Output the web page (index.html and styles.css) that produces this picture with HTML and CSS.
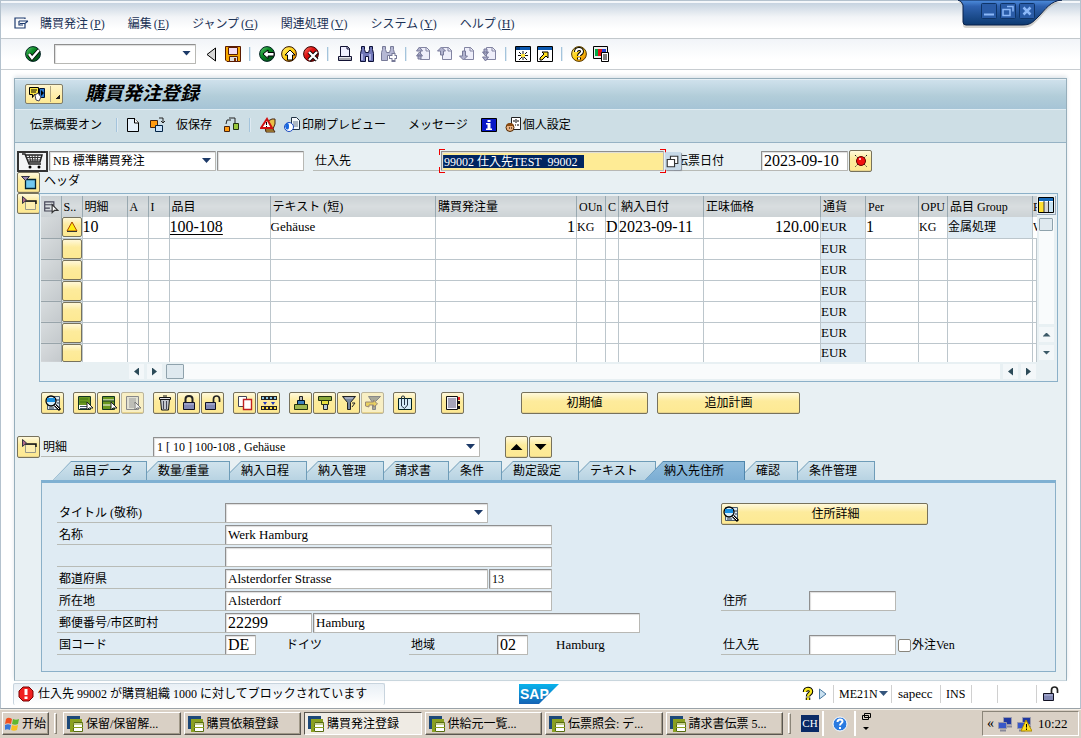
FILE: index.html
```html
<!DOCTYPE html>
<html lang="ja">
<head>
<meta charset="utf-8">
<title>購買発注登録</title>
<link rel="stylesheet" href="styles.css">
</head>
<body>
<svg class="defs" aria-hidden="true">
<defs>
<linearGradient id="gg" x1="0" y1="0" x2="1" y2="1"><stop offset="0" stop-color="#6fd07a"/><stop offset=".4" stop-color="#0a8a25"/><stop offset="1" stop-color="#033f10"/></linearGradient>
<linearGradient id="gy" x1="0" y1="0" x2="1" y2="1"><stop offset="0" stop-color="#fff27a"/><stop offset=".5" stop-color="#ffcf10"/><stop offset="1" stop-color="#e87a00"/></linearGradient>
<linearGradient id="gr" x1="0" y1="0" x2="1" y2="1"><stop offset="0" stop-color="#ff8a7a"/><stop offset=".4" stop-color="#e01010"/><stop offset="1" stop-color="#7a0505"/></linearGradient>
<linearGradient id="gsap" x1="0" y1="0" x2="0" y2="1"><stop offset="0" stop-color="#08b3ec"/><stop offset="1" stop-color="#1462b4"/></linearGradient>
<linearGradient id="gwin" x1="0" y1="0" x2="0" y2="1"><stop offset="0" stop-color="#4f8fe0"/><stop offset=".25" stop-color="#2f62b0"/><stop offset="1" stop-color="#0d3a70"/></linearGradient>
</defs>
<symbol id="exit" viewBox="0 0 16 16"><path d="M11 9v4H1V3h10v1M5 6h9M5 6v4h4M14 6l-3 2.5H6" fill="none" stroke="#1d3a6e" stroke-width="1.2"/></symbol>
<symbol id="ok" viewBox="0 0 16 16"><circle cx="8" cy="8" r="7.400" fill="url(#gg)" stroke="#022" /><path d="M4 8l3 4 7-8" fill="none" stroke="#000" stroke-width="4"/><path d="M4 8l3 4 7-8" fill="none" stroke="#fff" stroke-width="2.4"/></symbol>
<symbol id="prev" viewBox="0 0 16 16"><path d="M12.500 2v13L4 8.500z" fill="#d8d8d8" stroke="#000"/></symbol>
<symbol id="save" viewBox="0 0 16 16"><path d="M.500.500h15v15H2l-1.500-1.500z" fill="#f5a800" stroke="#5a1a00"/><path d="M3.500 1.500h9v7h-9z" fill="#f2dcf2" stroke="#5a1a00"/><path d="M4.500 10.500h8v5h-8z" fill="#ddd" stroke="#5a1a00"/><path d="M9 12h2v3H9z" fill="#7a2a00"/></symbol>
<symbol id="back" viewBox="0 0 16 16"><circle cx="8" cy="8" r="7.400" fill="url(#gg)" stroke="#022"/><path d="M4 8l5-4v2.500h6v3.500H9v2.500z" fill="#fff" stroke="#000"/></symbol>
<symbol id="upy" viewBox="0 0 16 16"><circle cx="8" cy="8" r="7.400" fill="url(#gy)" stroke="#310"/><path d="M9 4l5 5h-2.500v5h-5V9H4z" fill="#fff" stroke="#000"/></symbol>
<symbol id="cancel" viewBox="0 0 16 16"><circle cx="8" cy="8" r="7.400" fill="url(#gr)" stroke="#300"/><path d="M6 6l8 8M14 6l-8 8" stroke="#000" stroke-width="4"/><path d="M6 6l8 8M14 6l-8 8" stroke="#fff" stroke-width="2.400"/></symbol>
<symbol id="print" viewBox="0 0 16 16"><path d="M3.500.500h7l2 2v8h-9z" fill="#eef" stroke="#113"/><path d="M10 0v3h3" fill="none" stroke="#113"/><path d="M1.500 10.500h13v4h-13z" fill="#e4e4ec" stroke="#113"/><path d="M2 13h12" stroke="#667"/></symbol>
<symbol id="find" viewBox="0 0 16 16"><path d="M2.500 3.500v-3h3v3l1 3h3l1-3v-3h3v3l1 4v8h-5v-5h-3v5h-5v-8z" fill="#7077b8" stroke="#0c1038"/><path d="M3 8v6M11 8v6" stroke="#c4c8f0" stroke-width="1.500"/></symbol>
<symbol id="findn" viewBox="0 0 16 16"><path d="M1.500 3.500v-3h3v3l1 3h3l1-3v-3h3v3l1 4v5h-4v-3h-3v5h-6v-8z" fill="#b5b8d4" stroke="#777a98"/><path d="M8 11h8M12.500 7v9" stroke="#777a98" stroke-width="4"/><path d="M9 11h6M12.500 8v6" stroke="#fff" stroke-width="2"/></symbol>
<symbol id="sheet" viewBox="0 0 16 16"><path d="M5.500 1.500h6l3 3v9h-9z" fill="#eeeefa" stroke="#8284a2"/><path d="M11 1v4h4" fill="none" stroke="#8284a2"/></symbol>
<symbol id="pgf" viewBox="0 0 16 16"><use href="#sheet"/><path d="M4.500 1l3 4h-6zM4.500 6l3 4h-6zM3 9h3v4H3z" fill="#b0b2ce" stroke="#77799a"/></symbol>
<symbol id="pgu" viewBox="0 0 16 16"><use href="#sheet"/><path d="M4.500 1l4 4h-2v4h-3V5h-3z" fill="#b0b2ce" stroke="#77799a"/></symbol>
<symbol id="pgd" viewBox="0 0 16 16"><use href="#sheet"/><path d="M4.500 14l4-4h-2V5h-3v5h-3z" fill="#b0b2ce" stroke="#77799a"/></symbol>
<symbol id="pgl" viewBox="0 0 16 16"><use href="#sheet"/><path d="M4.500 15l3-4h-6zM4.500 10l3-4h-6zM3 3h3v4H3z" fill="#b0b2ce" stroke="#77799a"/></symbol>
<symbol id="sess" viewBox="0 0 16 16"><path d="M.5.5h15v15H.5z" fill="#fff" stroke="#000"/><path d="M1 1h14v3H1z" fill="#0a58b0"/><path d="M1 1h4v3H1z" fill="#003a80"/><path d="M8 5v9M3 9.500h10M4 6l8 8M12 6l-8 8" stroke="#111"/><path d="M6 8h4v3H6z" fill="#ffe640"/></symbol>
<symbol id="short" viewBox="0 0 16 16"><path d="M.5.5h15v15H.5z" fill="#fff" stroke="#000"/><path d="M1 1h14v3H1z" fill="#0a58b0"/><path d="M3 14v-2l4-4-2-2h6v6l-2-2-4 4z" fill="#ffe020" stroke="#000"/></symbol>
<symbol id="helpy" viewBox="0 0 16 16"><circle cx="8" cy="8" r="7.400" fill="url(#gy)" stroke="#543800"/><path d="M5 6c0-4 6-4 6-.5 0 2.500-3 2-3 4.500M8 11.500v2" fill="none" stroke="#000" stroke-width="4"/><path d="M5 6c0-4 6-4 6-.5 0 2.500-3 2-3 4.500M8 11.500v2" fill="none" stroke="#fff" stroke-width="2"/></symbol>
<symbol id="lay" viewBox="0 0 16 16"><path d="M.5.500h14v12H.5z" fill="#eee" stroke="#000"/><path d="M2 3h3v7H2z" fill="#0a4"/><path d="M5 3h4v7H5z" fill="#e01010"/><path d="M9 3h4v7H9z" fill="#2040d0"/><path d="M8.500 6.500h7v9h-7z" fill="#fff" stroke="#000"/><path d="M10 9h4M10 11h4M10 13h4" stroke="#000"/></symbol>
<symbol id="svc" viewBox="0 0 16 16"><path d="M.5 1.500h9v7h-4l-2 3v-3h-3z" fill="#ffe840" stroke="#000"/><path d="M2 4h6M2 6h5" stroke="#000"/><path d="M10.500 2.500h5v9h-5z" fill="#2a78d0" stroke="#013"/><path d="M12 4l3 3-3 3z" fill="#000"/><path d="M6 9l3-2 3 4-2 4-3-1z" fill="#fff" stroke="#445"/></symbol>
<symbol id="page" viewBox="0 0 16 16"><path d="M2.500 1.500h7l4 4v9h-11z" fill="#e4f0fa" stroke="#000"/><path d="M9.500 1v5h4" fill="#fff" stroke="#000"/></symbol>
<symbol id="other" viewBox="0 0 16 16"><path d="M1.500 3.500h7v7h-7z" fill="#ff9a10" stroke="#421"/><path d="M6.500 8.500h7v6h-7z" fill="#c8e0f8" stroke="#024"/><path d="M10 1h4v5M12 4l2 2 2-2" fill="none" stroke="#222"/></symbol>
<symbol id="hold" viewBox="0 0 16 16"><path d="M1.500 9.500h5v5h-5z" fill="#ff9a10" stroke="#421"/><path d="M10.500 6.500h5v6h-5z" fill="#9ac83c" stroke="#231"/><path d="M3 7l1-4h4M6 1h6v5" fill="none" stroke="#222"/></symbol>
<symbol id="chk" viewBox="0 0 16 16"><path d="M4 6l8-4h3v5l-2 5 2 3H6z" fill="#e8c048" stroke="#421"/><path d="M7 2l5 9H1z" fill="#fff" stroke="#d01010" stroke-width="2"/><path d="M6.500 5v3M6.500 9v1" stroke="#000"/><path d="M5 13h9" stroke="#421"/></symbol>
<symbol id="prv" viewBox="0 0 16 16"><path d="M7.500.500h5l3 3v9h-8z" fill="#f4f8fc" stroke="#234"/><path d="M9 5h5M9 7h5M9 9h5" stroke="#678"/><circle cx="5" cy="10" r="4.500" fill="#fff" stroke="#1848c0"/><path d="M1 9c1-4 4-4 4 0s-1 4-3 3z" fill="#1868e0"/></symbol>
<symbol id="info" viewBox="0 0 16 16"><path d="M.5 1.500h15v13H.5z" fill="#0818c8" stroke="#000"/><path d="M6.500 3h3v2h-3zM5 6h4.500v5.500H11V13H5v-1.500h1.500V7.500H5z" fill="#fff"/></symbol>
<symbol id="pers" viewBox="0 0 16 16"><path d="M6.500.500h9v12h-9z" fill="#fff" stroke="#222"/><path d="M8 4h2M12 4h2M10 8h1M12 8h2M11 2v4" stroke="#000"/><circle cx="5" cy="10.500" r="4" fill="#e8b080" stroke="#502800"/><path d="M1 9c1-4 7-4 8 0z" fill="#8a4a10"/><path d="M4 11h1M6 11h1" stroke="#000"/></symbol>
<symbol id="cart" viewBox="0 0 24 16"><path d="M1 1h3l4 10h12M5 2h16l-2 7H8" fill="none" stroke="#222" stroke-width="1.500"/><path d="M8 2l2 7M11 2l1 7M14 2v7M17 2l-1 7M6 4.500h14M7 7h12" stroke="#333"/><circle cx="9" cy="14" r="1.500"/><circle cx="18" cy="14" r="1.500"/></symbol>
<symbol id="opn" viewBox="0 0 16 16"><path d="M4.500 4.500h10v9h-10z" fill="#70c8f0" stroke="#023" stroke-width="1.300"/><path d="M.5 1.500h8l-4 4z" fill="#9a88b0" stroke="#334"/></symbol>
<symbol id="cls" viewBox="0 0 16 16"><path d="M4.500 5.500h10v8h-10z" fill="#fdeeb0" stroke="#998"/><path d="M4 5h11v3" fill="none" stroke="#111" stroke-width="1.500"/><path d="M1.500.500v7l4-3.500z" fill="#b06888" stroke="#334"/></symbol>
<symbol id="sel" viewBox="0 0 14 14"><path d="M1.500 2.500h8v8h-8zM1 5h8M1 8h5" fill="none" stroke="#445"/><path d="M8 5v7l2-2h3z" fill="#fff" stroke="#333"/></symbol>
<symbol id="warn" viewBox="0 0 14 14"><path d="M7 2l5 9H2z" fill="#ffee10" stroke="#a40" /><path d="M2 11.500h10" stroke="#333"/></symbol>
<symbol id="match" viewBox="0 0 16 16"><path d="M5.500 1.500h9v9h-9z" fill="#fff" stroke="#333" stroke-width="1.400"/><path d="M1.500 5.500h9v9h-9z" fill="#fff" stroke="#333" stroke-width="1.400"/></symbol>
<symbol id="red" viewBox="0 0 16 16"><path d="M2 2l12 12M14 2L2 14" stroke="#222" stroke-dasharray="1.500 1"/><circle cx="8" cy="8" r="4.500" fill="#f01010" stroke="#600"/><path d="M6 6h2" stroke="#fbb" stroke-width="2"/></symbol>
<symbol id="cfg" viewBox="0 0 16 16"><path d="M.5.5h15v15H.5z" fill="#fff" stroke="#000"/><path d="M1 1h14v3H1z" fill="#1468b8"/><path d="M1 5h5v10H1z" fill="#ffe030"/><path d="M6 5h4v10H6z" fill="#d8d8d8"/><path d="M11 5h4v10h-4z" fill="#c8e4f4"/><path d="M6 4v11M10.500 4v11" stroke="#333"/></symbol>
<symbol id="mag" viewBox="0 0 18 18"><path d="M3.500 2.500h12v13h-12z" fill="#dce8f2" stroke="#4a5a68"/><path d="M12 6h3M13 9h2M5 14h5" stroke="#234"/><circle cx="7" cy="7" r="5" fill="#d4ecfa" stroke="#000" stroke-width="1.300"/><path d="M3 4h8v4H3z" fill="#1890e0"/><path d="M11 11l5 5" stroke="#000" stroke-width="3"/><path d="M11 11l4 4" stroke="#fff"/></symbol>
<symbol id="sall" viewBox="0 0 18 18"><path d="M2.500 2.500h12v13h-12z" fill="#fff" stroke="#132"/><path d="M3 3h11v8H3z" fill="#6a9820"/><path d="M4 12.500h7M4 14.500h7" stroke="#456"/><path d="M4 5h8M4 8h7" stroke="#3c7010"/><path d="M11 8v8l2-2h4z" fill="#fff" stroke="#222"/></symbol>
<symbol id="sblk" viewBox="0 0 18 18"><path d="M2.500 2.500h12v13h-12z" fill="#6a9820" stroke="#132"/><path d="M3 6h11M3 11h8" stroke="#fff"/><path d="M3 7h11" stroke="#132"/><path d="M11 8v8l2-2h4z" fill="#fff" stroke="#222"/></symbol>
<symbol id="dsel" viewBox="0 0 18 18"><path d="M2.500 2.500h12v13h-12z" fill="#e2e2d4" stroke="#888"/><path d="M5 5h7M5 7h7M5 9h6M5 11h5M5 13h5" stroke="#999"/><path d="M11 8v8l2-2h4z" fill="#eee" stroke="#777"/></symbol>
<symbol id="trash" viewBox="0 0 18 18"><path d="M4.500 5h9l-1 11h-7z" fill="#c4c8d0" stroke="#111"/><path d="M3.500 3.500h11v2h-11zM7 2h4" fill="#e4e4ea" stroke="#111"/><path d="M7.500 7v8M10.500 7v8" stroke="#445"/></symbol>
<symbol id="lock" viewBox="0 0 18 18"><path d="M5.500 9V5c0-4 7-4 7 0v4" fill="none" stroke="#222" stroke-width="2"/><path d="M3.500 8.500h11v7h-11z" fill="#8288b4" stroke="#112"/><path d="M4 10h10" stroke="#b4b8dc"/></symbol>
<symbol id="unlock" viewBox="0 0 18 18"><path d="M9.500 9V5c0-4 6-4 6 0v3" fill="none" stroke="#222" stroke-width="1.700"/><path d="M1.500 8.500h10v7h-10z" fill="#8288b4" stroke="#112"/><path d="M2 10h9" stroke="#b4b8dc"/></symbol>
<symbol id="copy" viewBox="0 0 18 18"><path d="M2.500 2.500h8v10h-8z" fill="#fff" stroke="#445"/><path d="M7.500 5.500h8v10h-8z" fill="#fff" stroke="#c02020" stroke-width="1.400"/></symbol>
<symbol id="dflt" viewBox="0 0 18 18"><path d="M1 2h16v4H1zM1 12h16v4H1z" fill="#222"/><path d="M2 4h2M6 4h2M10 4h2M14 4h2" stroke="#8cc8e8" stroke-width="2"/><path d="M2 14h2M6 14h2M10 14h2M14 14h2" stroke="#ffe040" stroke-width="2"/><path d="M3 8h4l-2 3zM11 8h4l-2 3z" fill="#2038c0"/></symbol>
<symbol id="sasc" viewBox="0 0 18 18"><path d="M7.500 2.500h3v4h-3z" fill="#bbb" stroke="#222"/><path d="M5.500 6.500h7v4h-7z" fill="#3c80c0" stroke="#012"/><path d="M2.500 10.500h13v5h-13z" fill="#a0b850" stroke="#231"/></symbol>
<symbol id="sdes" viewBox="0 0 18 18"><path d="M2.500 2.500h13v4h-13z" fill="#8aa838" stroke="#231"/><path d="M5.500 6.500h7v4h-7z" fill="#e8e040" stroke="#231"/><path d="M7.500 10.500h4v5h-4z" fill="#b8ccd8" stroke="#222"/></symbol>
<symbol id="filt" viewBox="0 0 18 18"><path d="M2.500 2.500h13l-5 6v7h-3v-7z" fill="#7888a0" stroke="#222"/><path d="M5 4h8" stroke="#ccd"/><path d="M12 9h3l-3 4" fill="none" stroke="#222"/></symbol>
<symbol id="fdel" viewBox="0 0 18 18"><path d="M4.500 2.500h12l-5 5v8h-3v-7z" fill="#a8a898" stroke="#888"/><path d="M1.500 12V8h8V6l4 4-4 3v-2H5v2z" fill="#e8d060" stroke="#987"/></symbol>
<symbol id="att" viewBox="0 0 18 18"><path d="M2.500 4.500h13v11h-13z" fill="#d4ecf8" stroke="#022"/><path d="M5.500 3v9l3 2.500 3-3.500V4M5.500 3q0-1 1.500-1t1.500 1v8" fill="none" stroke="#234"/></symbol>
<symbol id="note" viewBox="0 0 18 18"><path d="M2.500 2.500h11v13h-11z" fill="#f4f4fa" stroke="#111"/><path d="M4 5h8M4 7h8M4 9h8M4 11h8M4 13h8" stroke="#557"/><path d="M14 3h2v3h-2z" fill="#e02020"/><path d="M14 7h2v3h-2zM14 12h2v3h-2z" fill="#111"/></symbol>
<symbol id="err" viewBox="0 0 16 16"><path d="M5 1h6l4 4v6l-4 4H5l-4-4V5z" fill="#f02020" stroke="#700"/><path d="M6.500 3h3v6h-3zM6.500 10.500h3v2.500h-3z" fill="#fff"/></symbol>
<symbol id="q" viewBox="0 0 14 16"><path d="M4 6c0-4 6-4 6-.5 0 2.500-3 2-3 5M7 11.500v2.500" fill="none" stroke="#000" stroke-width="4.500"/><path d="M4 6c0-4 6-4 6-.5 0 2.500-3 2-3 5M7 11.500v2.500" fill="none" stroke="#f8e820" stroke-width="2.400"/></symbol>
<symbol id="play" viewBox="0 0 10 16"><path d="M1.500 3v10L8 8z" fill="#c8e0f0" stroke="#4878a0"/></symbol>
<symbol id="flag" viewBox="0 0 16 16"><path d="M2 3c2-2 4-1 6 0l-1 5c-2-1-4-1-6 0z" fill="#f05020"/><path d="M9 3c2 1 4 1 6 0l-1 5c-2 1-4 1-6 0z" fill="#60b830"/><path d="M1 9c2-1 4-1 6 0l-1 5c-2-1-4-1-5 0z" fill="#3878d8"/><path d="M8 9c2 1 4 1 6 0l-1 5c-2 1-4 1-6 0z" fill="#f8c020"/></symbol>
<symbol id="win" viewBox="0 0 18 18"><path d="M1 1h13v3H4v10H1z" fill="#1c4878"/><path d="M4 4h12v3H7v10H4z" fill="#8aa020"/><path d="M7.500 7.500h9v9h-9z" fill="#fff" stroke="#566b10"/><path d="M7 9h10M7 12.500h10" stroke="#8aa020"/></symbol>
<symbol id="helpb" viewBox="0 0 16 16"><circle cx="8" cy="8" r="7" fill="#2a7ae0" stroke="#fff"/><path d="M5.500 6c0-3.500 5-3 5-.5 0 2-2.500 1.500-2.500 4M8 11v2" fill="none" stroke="#fff" stroke-width="2"/></symbol>
<symbol id="rest" viewBox="0 0 10 10"><path d="M3.500 1.500h6v4h-6zM1.500 3.500h6v4h-6z" fill="#d8d0c4" stroke="#000"/></symbol>
<symbol id="net" viewBox="0 0 16 16"><path d="M6.500 1.500h8v7h-8z" fill="#2038a0" stroke="#99a"/><path d="M1.500 6.500h8v6h-8z" fill="#3858c8" stroke="#99a"/><path d="M3 14.500h6M10 10.500h5" stroke="#889" stroke-width="2"/></symbol>
</svg>

<div class="app">
  <header class="menubar">
    <svg class="ic"><use href="#exit"/></svg>
    <nav class="menu">
      <button type="button">購買発注<span>(<u>P</u>)</span></button><button type="button">編集<span>(<u>E</u>)</span></button><button type="button">ジャンプ<span>(<u>G</u>)</span></button><button type="button">関連処理<span>(<u>V</u>)</span></button><button type="button">システム<span>(<u>Y</u>)</span></button><button type="button">ヘルプ<span>(<u>H</u>)</span></button>
    </nav>
    <svg class="winctl" viewBox="0 0 104 32" role="img" aria-label="ウィンドウ操作">
      <path d="M0 0h104c-12 2-16 10-24 18-6 6-8 8-16 8H8q-3 0-3-3V5Q4 1 0 0z" fill="#b8b4ac" opacity=".6" transform="translate(0 2)"/>
      <path d="M0 0h104c-12 1-16 9-24 17-6 6-8 8-16 8H8q-3 0-3-3V5Q4 1 0 0z" fill="url(#gwin)" stroke="#08204a"/>
      <g fill="#2a5ca8" stroke="#0e3468"><rect x="23.500" y="3.500" width="15" height="15" rx="1"/><rect x="42.500" y="3.500" width="15" height="15" rx="1"/><rect x="61.500" y="3.500" width="15" height="15" rx="1"/></g>
      <path d="M26 14.500h10" stroke="#8cb8f8" stroke-width="2"/><path d="M49 6.500h6v5M45 9.500h7v6h-7z" fill="none" stroke="#8cb8f8" stroke-width="1.500"/><path d="M65.500 7.500l7 7M72.500 7.500l-7 7" stroke="#8cb8f8" stroke-width="2.500"/>
    </svg>
  </header>

  <div class="stdbar">
    <button class="tb" aria-label="Enter"><svg class="ic"><use href="#ok"/></svg></button>
    <span class="combo cmd"><select aria-label="コマンド"><option></option></select></span>
    <div class="tools">
      <button class="tb" aria-label="閉じる"><svg class="ic"><use href="#prev"/></svg></button>
      <button class="tb" aria-label="保存"><svg class="ic"><use href="#save"/></svg></button><i class="sep"></i>
      <button class="tb" aria-label="戻る"><svg class="ic"><use href="#back"/></svg></button>
      <button class="tb" aria-label="終了"><svg class="ic"><use href="#upy"/></svg></button>
      <button class="tb" aria-label="取消"><svg class="ic"><use href="#cancel"/></svg></button><i class="sep"></i>
      <button class="tb" aria-label="印刷"><svg class="ic"><use href="#print"/></svg></button>
      <button class="tb" aria-label="検索"><svg class="ic"><use href="#find"/></svg></button>
      <button class="tb" aria-label="次を検索"><svg class="ic"><use href="#findn"/></svg></button><i class="sep"></i>
      <button class="tb" aria-label="先頭ページ"><svg class="ic"><use href="#pgf"/></svg></button>
      <button class="tb" aria-label="前ページ"><svg class="ic"><use href="#pgu"/></svg></button>
      <button class="tb" aria-label="次ページ"><svg class="ic"><use href="#pgd"/></svg></button>
      <button class="tb" aria-label="最終ページ"><svg class="ic"><use href="#pgl"/></svg></button><i class="sep"></i>
      <button class="tb" aria-label="新規セッション"><svg class="ic"><use href="#sess"/></svg></button>
      <button class="tb" aria-label="ショートカット"><svg class="ic"><use href="#short"/></svg></button><i class="sep"></i>
      <button class="tb" aria-label="ヘルプ"><svg class="ic"><use href="#helpy"/></svg></button>
      <button class="tb" aria-label="レイアウト"><svg class="ic"><use href="#lay"/></svg></button>
    </div>
  </div>

  <main class="screen">
    <div class="titlebar">
      <button class="svcbtn" aria-label="サービス"><svg class="ic"><use href="#svc"/></svg><i></i></button>
      <h1>購買発注登録</h1>
    </div>
    <div class="appbar">
      <button class="tb">伝票概要オン</button><i class="sep s1"></i>
      <button class="tb" aria-label="新規"><svg class="ic"><use href="#page"/></svg></button>
      <button class="tb" aria-label="他の購買発注"><svg class="ic"><use href="#other"/></svg></button>
      <button class="tb park">仮保存</button>
      <button class="tb" aria-label="階層"><svg class="ic"><use href="#hold"/></svg></button><i class="sep s2"></i>
      <button class="tb" aria-label="チェック"><svg class="ic"><use href="#chk"/></svg></button>
      <button class="tb"><svg class="ic"><use href="#prv"/></svg>印刷プレビュー</button>
      <button class="tb msg">メッセージ</button>
      <button class="tb" aria-label="情報"><svg class="ic"><use href="#info"/></svg></button>
      <button class="tb"><svg class="ic"><use href="#pers"/></svg>個人設定</button>
    </div>

    <div class="content">
      <div class="dochead">
        <button class="cart" aria-label="カート"><svg><use href="#cart"/></svg></button>
        <span class="combo doctype"><select aria-label="伝票タイプ"><option>NB 標準購買発注</option></select></span>
        <input class="fld docno" aria-label="伝票番号">
        <label class="lb vend" for="vendor">仕入先</label>
        <span class="focus"><input class="fld" id="vendor" value="99002 仕入先TEST  99002"><i class="mk tl"></i><i class="mk tr"></i><i class="mk bl"></i><i class="mk br"></i></span>
        <button class="match" aria-label="検索ヘルプ"><svg><use href="#match"/></svg></button>
        <label class="lb date" for="docdate">伝票日付</label>
        <input class="fld big dd" id="docdate" value="2023-09-10">
        <button class="yb" aria-label="日付状況"><svg><use href="#red"/></svg></button>
      </div>

      <div class="overview">
        <div class="side">
          <button class="yb" aria-label="ヘッダを開く"><svg><use href="#opn"/></svg></button>
          <button class="yb" aria-label="明細一覧を閉じる"><svg><use href="#cls"/></svg></button>
        </div>
        <div class="ovmain">
          <div class="hdrlabel">ヘッダ</div>
          <div class="gridbox">
            <div class="gridrow">
              <table class="grid">
                <colgroup><col class="w20"><col class="w21"><col class="w45"><col class="w21"><col class="w21"><col class="w101"><col><col class="w141"><col class="w29"><col class="w13"><col class="w85"><col class="w117"><col class="w45"><col class="w53"><col class="w29"><col class="w85"><col class="w4"></colgroup>
                <thead><tr><th><svg class="ic"><use href="#sel"/></svg></th><th>S..</th><th>明細</th><th>A</th><th>I</th><th>品目</th><th>テキスト (短)</th><th>購買発注量</th><th>OUn</th><th>C</th><th>納入日付</th><th>正味価格</th><th>通貨</th><th>Per</th><th>OPU</th><th>品目 Group</th><th class="cut">P</th></tr></thead>
                <tbody>
                <tr><td class="rs"></td><td class="st"><button aria-label="警告"><svg><use href="#warn"/></svg></button></td><td class="big">10</td><td></td><td></td><td class="big"><a href="#item">100-108</a></td><td class="lat">Gehäuse</td><td class="big num">1</td><td>KG</td><td class="big">D</td><td class="big">2023-09-11</td><td class="big num">120.00</td><td class="ro eur">EUR</td><td class="big">1</td><td>KG</td><td class="ro">金属処理</td><td class="cut">W</td></tr>
                <tr><td class="rs"></td><td class="st"><button aria-label="状況"></button></td><td></td><td></td><td></td><td></td><td></td><td></td><td></td><td></td><td></td><td></td><td class="ro eur">EUR</td><td></td><td></td><td></td><td></td></tr>
                <tr><td class="rs"></td><td class="st"><button aria-label="状況"></button></td><td></td><td></td><td></td><td></td><td></td><td></td><td></td><td></td><td></td><td></td><td class="ro eur">EUR</td><td></td><td></td><td></td><td></td></tr>
                <tr><td class="rs"></td><td class="st"><button aria-label="状況"></button></td><td></td><td></td><td></td><td></td><td></td><td></td><td></td><td></td><td></td><td></td><td class="ro eur">EUR</td><td></td><td></td><td></td><td></td></tr>
                <tr><td class="rs"></td><td class="st"><button aria-label="状況"></button></td><td></td><td></td><td></td><td></td><td></td><td></td><td></td><td></td><td></td><td></td><td class="ro eur">EUR</td><td></td><td></td><td></td><td></td></tr>
                <tr><td class="rs"></td><td class="st"><button aria-label="状況"></button></td><td></td><td></td><td></td><td></td><td></td><td></td><td></td><td></td><td></td><td></td><td class="ro eur">EUR</td><td></td><td></td><td></td><td></td></tr>
                <tr class="last"><td class="rs"></td><td class="st"><button aria-label="状況"></button></td><td></td><td></td><td></td><td></td><td></td><td></td><td></td><td></td><td></td><td></td><td class="ro eur">EUR</td><td></td><td></td><td></td><td></td></tr>
                </tbody>
              </table>
              <div class="vscroll">
                <button class="cfg" aria-label="テーブル設定"><svg class="ic"><use href="#cfg"/></svg></button>
                <div class="vtrack"><i class="thumb"></i></div>
                <button class="arr" aria-label="上へ"><i class="a-up"></i></button>
                <button class="arr" aria-label="下へ"><i class="a-dn"></i></button>
              </div>
            </div>
            <div class="hscroll">
              <button class="arr" aria-label="左へ"><i class="a-lt"></i></button><button class="arr" aria-label="右へ"><i class="a-rt"></i></button>
              <div class="htrack"><i class="thumb"></i></div>
              <button class="arr" aria-label="左へ"><i class="a-lt"></i></button><button class="arr" aria-label="右へ"><i class="a-rt"></i></button>
            </div>
          </div>
        </div>
      </div>

      <div class="itembar">
        <div class="grp"><button class="yb" aria-label="明細照会"><svg><use href="#mag"/></svg></button></div>
        <div class="grp"><button class="yb" aria-label="全選択"><svg><use href="#sall"/></svg></button><button class="yb" aria-label="ブロック選択"><svg><use href="#sblk"/></svg></button><button class="yb dis" aria-label="選択解除"><svg><use href="#dsel"/></svg></button></div>
        <div class="grp"><button class="yb" aria-label="削除"><svg><use href="#trash"/></svg></button><button class="yb" aria-label="ロック"><svg><use href="#lock"/></svg></button><button class="yb" aria-label="ロック解除"><svg><use href="#unlock"/></svg></button></div>
        <div class="grp"><button class="yb" aria-label="コピー"><svg><use href="#copy"/></svg></button><button class="yb" aria-label="項目一括"><svg><use href="#dflt"/></svg></button></div>
        <div class="grp"><button class="yb" aria-label="昇順"><svg><use href="#sasc"/></svg></button><button class="yb" aria-label="降順"><svg><use href="#sdes"/></svg></button><button class="yb" aria-label="フィルタ"><svg><use href="#filt"/></svg></button><button class="yb dis" aria-label="フィルタ解除"><svg><use href="#fdel"/></svg></button></div>
        <div class="grp"><button class="yb" aria-label="添付"><svg><use href="#att"/></svg></button></div>
        <div class="grp g2"><button class="yb" aria-label="メモ"><svg><use href="#note"/></svg></button></div>
        <button class="yb wide d1">初期値</button><button class="yb wide d2">追加計画</button>
      </div>

      <div class="detail">
        <button class="yb" aria-label="明細詳細を閉じる"><svg><use href="#cls"/></svg></button>
        <label class="lb itl" for="item">明細</label>
        <span class="combo itemsel"><select id="item"><option>1 [ 10 ] 100-108 , Gehäuse</option></select></span>
        <div class="updn"><button class="yb" aria-label="前の明細"><i class="b-up"></i></button><button class="yb" aria-label="次の明細"><i class="b-dn"></i></button></div>
      </div>

      <div class="tabs">
        <button class="tab first w94">品目データ</button><button class="tab w83">数量/重量</button><button class="tab w77">納入日程</button><button class="tab w77">納入管理</button><button class="tab w65">請求書</button><button class="tab w53">条件</button><button class="tab w77">勘定設定</button><button class="tab w77">テキスト</button><button class="tab act">納入先住所</button><button class="tab w53">確認</button><button class="tab w77">条件管理</button>
      </div>
      <section class="panel">
        <div class="form">
          <div class="r"><label class="lb" for="f1">タイトル (敬称)</label><span class="combo w263"><select id="f1"><option></option></select></span></div>
          <div class="r"><label class="lb" for="f2">名称</label><input class="fld lat w327" id="f2" value="Werk Hamburg"></div>
          <div class="r"><label class="lb" for="f3"></label><input class="fld lat w327" id="f3" aria-label="名称2"></div>
          <div class="r"><label class="lb" for="f4">都道府県</label><input class="fld lat w263" id="f4" value="Alsterdorfer Strasse"><input class="fld w63" aria-label="番地" value="13"></div>
          <div class="r"><label class="lb" for="f5">所在地</label><input class="fld lat w327" id="f5" value="Alsterdorf"></div>
          <div class="r"><label class="lb" for="f6">郵便番号/市区町村</label><input class="fld big w87" id="f6" value="22299"><input class="fld lat w327" aria-label="市区町村" value="Hamburg"></div>
          <div class="r"><label class="lb" for="f7">国コード</label><input class="fld big w31" id="f7" value="DE"><span class="ctry">ドイツ</span><label class="lb reg" for="f8">地域</label><input class="fld big w31" id="f8" value="02"><span class="lat city">Hamburg</span></div>
        </div>
        <div class="form2">
          <button class="yb addr"><svg><use href="#mag"/></svg><span>住所詳細</span></button>
          <div class="r a1"><label class="lb" for="g1">住所</label><input class="fld w87" id="g1"></div>
          <div class="r a2"><label class="lb" for="g2">仕入先</label><input class="fld w87" id="g2"><label class="ck"><input type="checkbox">外注Ven</label></div>
        </div>
      </section>
    </div>
  </main>

  <footer class="status">
    <div class="smsg"><svg class="ic"><use href="#err"/></svg>仕入先 99002 が購買組織 1000 に対してブロックされています</div>
    <svg class="sap" viewBox="0 0 40 20" role="img" aria-label="SAP"><path d="M0 0h40L20 20H0z" fill="url(#gsap)"/><text x="1" y="15" class="saptext">SAP</text></svg>
    <div class="sright">
      <svg class="qi"><use href="#q"/></svg><svg class="pi"><use href="#play"/></svg>
      <button class="sf me">ME21N<i class="car"></i></button><span class="sf sy">sapecc</span><span class="sf ins">INS</span><span class="sf e1"></span><span class="sf e2"></span><span class="sf lk"><svg><use href="#unlock"/></svg></span>
    </div>
  </footer>
</div>

<div class="taskbar">
  <button class="tk start"><svg class="ic"><use href="#flag"/></svg>开始</button><i class="grip"></i>
  <div class="tasks">
    <button class="tk"><svg><use href="#win"/></svg>保留/保留解...</button><button class="tk"><svg><use href="#win"/></svg>購買依頼登録</button><button class="tk on"><svg><use href="#win"/></svg>購買発注登録</button><button class="tk"><svg><use href="#win"/></svg>供給元一覧...</button><button class="tk"><svg><use href="#win"/></svg>伝票照会: デ...</button><button class="tk"><svg><use href="#win"/></svg>請求書伝票 5...</button>
  </div>
  <i class="grip"></i><span class="ch">CH</span><i class="grip thin"></i><svg class="ic hb"><use href="#helpb"/></svg><i class="grip thin"></i>
  <span class="restc"><svg><use href="#rest"/></svg><i></i></span>
  <div class="tray"><b>«</b><svg class="ic"><use href="#net"/></svg><svg class="ic" viewBox="0 0 16 16"><use href="#net"/><path d="M10 4l6 11H5z" fill="#ffe020" stroke="#a80"/><path d="M10.500 8v3.500M10.500 12.500v1.500" stroke="#000"/></svg><span>10:22</span></div>
</div>
</body>
</html>
```
FILE: styles.css
```css
* { box-sizing: border-box; }
body { margin: 0; min-height: 100vh; display: flex; flex-direction: column; background: #fff; color: #000; font: 12px/18px "Liberation Serif", "Noto Sans CJK JP", serif; }
button, input, select { font: inherit; color: inherit; margin: 0; }
button { padding: 0; border: 0; background: none; white-space: nowrap; }
i { font-style: normal; display: block; flex: none; }
svg { display: block; flex: none; }
.defs { position: absolute; width: 0; height: 0; }
.ic { width: 16px; height: 16px; }

.app { flex: 1; display: flex; flex-direction: column; border: 1px solid #b4c2ce; border-bottom-color: #9aa2a8; background: #fff; }

.menubar { position: relative; height: 38px; flex: none; display: flex; align-items: center; padding: 5px 12px 0 13px; border-top: 2px solid #f4f7fa; border-bottom: 1px solid #c2c8cc; background: linear-gradient(#c6d3e0, #f2f4f7 14px, #fff 26px); }
.menu { display: flex; gap: 23px; margin-left: 10px; padding-top: 2px; color: #1c3357; }
.menu button { display: flex; }
.menu span { padding-left: 2px; }
.winctl { position: absolute; top: -3px; right: 18px; width: 104px; height: 32px; }

.stdbar { height: 31px; flex: none; display: flex; align-items: center; padding: 0 24px 1px; border-bottom: 1px solid #c8cdd1; background: linear-gradient(#f1f4f8, #fff 20px); }
.tools { display: flex; align-items: center; gap: 6px; margin-left: 7px; }
.tb { display: flex; align-items: center; gap: 2px; }
.sep { width: 2px; height: 14px; margin: 0 2px; background: linear-gradient(90deg, #a4c4dc 50%, #dfeaf2 50%); }

.combo { position: relative; display: block; flex: none; height: 20px; }
.combo select { appearance: none; width: 100%; height: 20px; padding: 0 16px 0 3px; border: 1px solid #8f8f8f; border-right-color: #b8b8b4; border-bottom-color: #b8b8b4; border-radius: 1px; background: #fff; box-shadow: inset 1px 1px 1px #ddd; }
.combo::after { content: ""; position: absolute; right: 5px; top: 7px; width: 9px; height: 5px; background: #1d3a68; clip-path: polygon(0 0, 100% 0, 50% 100%); }
.cmd { width: 142px; margin-left: 13px; }

.screen { flex: 1; display: flex; flex-direction: column; margin: 8px 13px 0; border: 1px solid #96aebb; border-bottom-color: #c9d6dd; background: #e8f0f3; box-shadow: 0 -2px 4px #dfe5ea; }
.titlebar { height: 31px; flex: none; display: flex; align-items: center; padding: 0 0 2px 10px; border-top: 1px solid #e6f0f6; border-bottom: 1px solid #e0ecf2; background: linear-gradient(#cfe1ec, #b2cdd9 16px, #a6c4d6); }
.svcbtn { display: flex; align-items: center; width: 38px; height: 20px; padding-left: 3px; border: 1px solid #807c68; border-radius: 2px; background: linear-gradient(#fff6cc, #fde892); }
.svcbtn i { width: 12px; height: 16px; margin-left: 5px; border-left: 1px solid #b0a680; background: linear-gradient(135deg, transparent 50%, #222 50%) no-repeat 5px 9px / 4px 4px; }
h1 { margin: 0 0 4px 22px; font: italic bold 19px/24px "Noto Sans CJK JP", sans-serif; }
.appbar { height: 33px; flex: none; display: flex; align-items: center; gap: 7px; padding: 0 15px 2px; border-bottom: 1px solid #96b2c4; background: #cddee5; }
.appbar .s1 { margin: 0 0 0 6px; }
.appbar .tb { margin-right: 1px; }
.appbar .park { margin: 0 4px 0 3px; }
.appbar .msg { margin: 0 6px 0 14px; }

.content { flex: 1; padding: 7px 8px 8px 2px; }
.fld { flex: none; min-width: 0; height: 20px; padding: 0 2px; border: 1px solid #8f8f8f; border-right-color: #b8b8b4; border-bottom-color: #b8b8b4; border-radius: 1px; background: #fff; box-shadow: inset 1px 1px 1px #ddd; }
.big { font-size: 16px; }
.lat { font-size: 13px; }
.lb { flex: none; height: 20px; line-height: 20px; border-bottom: 1px solid #b8bbb6; padding-left: 2px; }
.yb { flex: none; display: flex; align-items: center; justify-content: center; width: 23px; height: 22px; border: 1px solid #77725c; border-radius: 2px; background: linear-gradient(#fff9dc, #fdeb9c 40%, #fde992); box-shadow: inset 0 -1px #e8d48c; }
.yb svg { width: 18px; height: 18px; }
.dis { border-color: #bbb59c; background: #f8efc4; }

.dochead { display: flex; align-items: center; height: 22px; }
.cart { width: 31px; height: 21px; border: 2px solid #333; background: #f2f4f5; padding: 0 2px; }
.cart svg { width: 24px; height: 16px; }
.doctype { width: 167px; margin-left: 1px; }
.docno { width: 87px; margin-left: 1px; }
.vend { width: 126px; margin-left: 9px; }
.focus { position: relative; flex: none; margin-left: 2px; }
.focus .fld { display: block; width: 223px; color: #fff; background: linear-gradient(#002560, #002560) no-repeat 1px 3px / 141px 13px, #feeb95; }
.mk { position: absolute; width: 6px; height: 6px; border: 0 solid #f00000; }
.tl { left: -2px; top: -2px; border-width: 1px 0 0 1px; }
.tr { right: -2px; top: -2px; border-width: 1px 1px 0 0; }
.bl { left: -2px; bottom: -2px; border-width: 0 0 1px 1px; }
.br { right: -2px; bottom: -2px; border-width: 0 1px 1px 0; }
.match { z-index: 1; flex: none; width: 16px; height: 18px; margin-left: 1px; padding: 2px 1px; border-radius: 1px; background: #c8dae8; box-shadow: 1px 1px 1px #8a9098; }
.match svg { width: 13px; height: 13px; }
.date { width: 87px; margin-left: -7px; }
.dd { width: 87px; margin-right: 1px; }
.dochead .yb svg { width: 16px; height: 16px; }

.overview { display: flex; }
.side { flex: none; width: 22px; display: flex; flex-direction: column; }
.side .yb { height: 21px; }
.side svg { width: 16px; height: 16px; }
.ovmain { flex: 1; min-width: 0; }
.hdrlabel { height: 21px; padding-left: 5px; line-height: 19px; }
.gridbox { height: 189px; border: 1px solid #8bb0c8; padding: 2px 1px; }
.gridrow { display: flex; }
.grid { flex: 1; min-width: 0; width: 100%; table-layout: fixed; border-collapse: collapse; background: #fff; }
.grid th { height: 21px; padding: 0 0 0 2px; text-align: left; font-weight: normal; white-space: nowrap; overflow: hidden; border-right: 1px solid #98a8b0; background: linear-gradient(#cbd1d4, #d8dddf 50%, #ccd2d5); }
.grid td { height: 21px; padding: 0 1px 0 0; line-height: 18px; white-space: nowrap; overflow: hidden; border-right: 1px solid #bcc6cc; border-bottom: 1px solid #bcc6cc; }
.grid .last td { height: 19px; border-bottom: 0; }
.grid .cut { padding: 0; border-right: 0; }
.grid td.rs { background: linear-gradient(135deg, #d8dcde, #c4c9cc); border-color: #98a4aa; }
.grid td.st { padding: 0; background: #e8f0f3; }
.st button { display: block; width: 20px; height: 20px; padding: 2px; border: 1px solid #77725c; border-radius: 2px; background: linear-gradient(#fff8d8, #fdeb9c 40%, #fde992); }
.last .st button { height: 18px; }
.st svg { width: 14px; height: 14px; }
.grid .ro { background: #dfebf3; }
.grid .eur { font-size: 13px; }
.grid a { color: #000; text-decoration: underline; text-underline-offset: 2px; }
.num { text-align: right; }
.w20 { width: 20px; } .w21 { width: 21px; } .w45 { width: 45px; } .w101 { width: 101px; } .w141 { width: 141px; } .w29 { width: 29px; } .w13 { width: 13px; } .w85 { width: 85px; } .w117 { width: 117px; } .w4 { width: 4px; }

.vscroll { flex: none; width: 19px; display: flex; flex-direction: column; align-items: center; gap: 3px; padding-bottom: 2px; }
.cfg { padding: 1px; border-right: 1px solid #9ab; border-bottom: 1px solid #9ab; }
.vtrack { flex: 1; width: 15px; background: #f9fbfc; }
.thumb { width: 14px; height: 13px; border: 1px solid #8fa2ac; border-radius: 1px; background: #dfe9ef; }
.arr { flex: none; display: flex; align-items: center; justify-content: center; width: 15px; height: 15px; background: #f3f7f9; }
.a-up, .a-dn { width: 8px; height: 4px; background: #3c5a68; clip-path: polygon(50% 0, 100% 100%, 0 100%); }
.a-dn { clip-path: polygon(0 0, 100% 0, 50% 100%); }
.a-lt, .a-rt { width: 5px; height: 8px; background: #2c4a58; clip-path: polygon(0 50%, 100% 0, 100% 100%); }
.a-rt { clip-path: polygon(0 0, 100% 50%, 0 100%); }
.hscroll { display: flex; gap: 3px; margin: 2px 20px 0 88px; }
.htrack { flex: 1; height: 15px; margin-left: 1px; background: #f9fbfc; }
.htrack .thumb { width: 18px; height: 15px; }

.itembar { display: flex; gap: 9px; margin: 10px 0 0 24px; }
.grp { display: flex; gap: 1px; }
.g2 { margin-left: 16px; }
.d1 { width: 127px; margin-left: 48px; }
.d2 { width: 143px; }

.detail { display: flex; align-items: center; margin-top: 22px; }
.detail > .yb svg { width: 16px; height: 16px; }
.itl { width: 112px; margin-left: 1px; }
.itemsel { width: 327px; }
.updn { display: flex; gap: 1px; margin-left: 25px; }
.b-up, .b-dn { width: 12px; height: 6px; background: #000; clip-path: polygon(50% 0, 100% 100%, 0 100%); }
.b-dn { clip-path: polygon(0 0, 100% 0, 50% 100%); }

.tabs { display: flex; margin: 3px 0 0 36px; }
.tab { flex: none; height: 19px; padding: 1px 0 0 11px; text-align: left; line-height: 17px; background: #6e9cb8; clip-path: polygon(0 11px, 11px 0, 100% 0, 100% 100%, 0 100%); position: relative; z-index: 0; }
.tab::before { content: ""; position: absolute; z-index: -1; inset: 1px 1px 0 0; background: linear-gradient(#d0e3ed, #b8d3e2); clip-path: polygon(0 11px, 11px 0, 100% 0, 100% 100%, 0 100%); }
.first, .first::before, .act, .act::before { clip-path: polygon(0 100%, 18px 0, 100% 0, 100% 100%); }
.first { padding-left: 20px; }
.act { z-index: 1; width: 100px; margin-left: -11px; padding-left: 19px; background: #4f86ac; }
.act::before { background: linear-gradient(#90bcdc, #7caed4); }
.w94 { width: 94px; } .w83 { width: 83px; } .w77 { width: 77px; } .w65 { width: 65px; } .w53 { width: 53px; }
.panel { display: flex; height: 192px; margin: 0 2px 0 24px; padding: 20px 0 0 15px; border: 1px solid #8bb0c8; border-top: 3px solid #7fb0d2; background: #dfebf3; }
.form { flex: none; width: 664px; display: flex; flex-direction: column; gap: 2px; }
.r { display: flex; height: 20px; line-height: 20px; }
.r .lb { width: 168px; }
.w263 { width: 263px; } .w327 { width: 327px; } .w63 { width: 63px; margin-left: 1px; } .w87 { width: 87px; } .w31 { width: 31px; }
.w87 + .lat { margin-left: 1px; }
.ctry { width: 123px; margin-left: 30px; }
.r .reg { width: 88px; }
.city { margin-left: 28px; }
.addr { width: 207px; }
.addr span { flex: 1; padding-left: 4px; text-align: center; }
.form2 .r .lb { width: 88px; }
.a1 { margin-top: 66px; }
.a2 { margin-top: 24px; }
.ck { display: flex; align-items: center; gap: 1px; margin-left: 2px; }
.ck input { appearance: none; width: 13px; height: 13px; border: 1px solid #88857c; border-radius: 2px; background: #fff; }

.status { flex: none; display: flex; align-items: center; height: 27px; padding: 0 20px 2px 12px; }
.smsg { display: flex; align-items: center; gap: 4px; width: 372px; height: 22px; padding-left: 4px; border: 1px solid #c8d4de; border-bottom: 0; border-radius: 2px; background: linear-gradient(#e8eff5, #fff); white-space: nowrap; }
.sap { width: 40px; height: 20px; margin-left: 134px; }
.saptext { font: bold 14px "Liberation Sans", sans-serif; fill: #fff; }
.sright { display: flex; align-items: center; margin-left: auto; }
.qi { width: 14px; height: 16px; margin-right: 3px; }
.pi { width: 10px; height: 16px; margin-right: 5px; }
.sf { display: flex; align-items: center; height: 18px; padding-left: 5px; border-left: 1px solid #d0d0d0; }
.me { width: 58px; }
.sy { width: 49px; padding-left: 6px; font-size: 13px; }
.ins { width: 31px; }
.e1 { width: 26px; }
.e2 { width: 39px; }
.lk svg { width: 18px; height: 18px; }
.car { width: 9px; height: 5px; margin: 0 3px 0 auto; background: #34557c; clip-path: polygon(0 0, 100% 0, 50% 100%); }

.taskbar { flex: none; display: flex; align-items: center; height: 30px; padding: 0 2px 2px; border-top: 1px solid #f4f0e8; background: #d9d0c5; }
.tk { display: flex; align-items: center; gap: 2px; height: 23px; padding-left: 2px; border: 1px solid; border-color: #fff #5a5650 #5a5650 #fff; box-shadow: inset -1px -1px #a09888; overflow: hidden; }
.tk svg { width: 18px; height: 18px; }
.start { flex: none; width: 47px; padding-left: 1px; font-family: "Liberation Serif", "Noto Sans CJK SC", serif; }
.start .ic { width: 16px; height: 16px; }
.grip { width: 3px; height: 21px; margin: 0 6px 0 5px; border: 1px solid; border-color: #fff #8a8478 #8a8478 #fff; }
.tasks { flex: 1; max-width: 720px; display: flex; gap: 3px; }
.tasks .tk { flex: 1; }
.tk.on { border-color: #5a5650 #fff #fff #5a5650; box-shadow: none; background: #efebe4; }
.ch { margin-left: 4px; width: 18px; height: 17px; font-size: 11px; line-height: 17px; text-align: center; color: #fff; background: #0a2a66; }
.thin { width: 2px; margin: 0 5px 0 3px; border-width: 0 1px; border-color: #8a8478 #fff; height: 25px; }
.hb { margin: 0 3px; }
.restc svg { width: 10px; height: 10px; }
.restc i { width: 6px; height: 3px; margin: 5px 2px; background: #000; clip-path: polygon(0 0, 100% 0, 50% 100%); }
.tray { display: flex; align-items: center; gap: 3px; width: 97px; height: 25px; margin-left: auto; padding: 0 4px; border: 1px solid; border-color: #8a8478 #fff #fff #8a8478; }
.tray b { font-size: 14px; font-weight: normal; }
.tray span { margin-left: 3px; font-size: 13px; }
```
